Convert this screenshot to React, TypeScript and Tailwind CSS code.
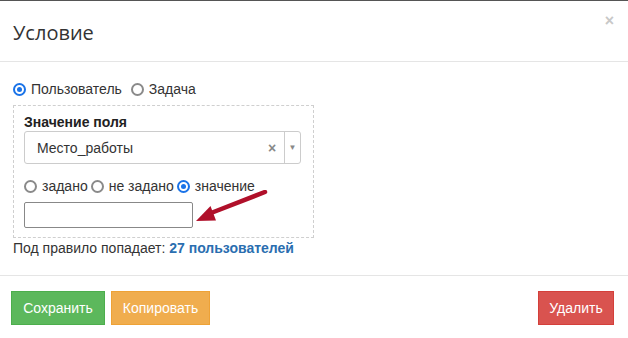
const Radio: React.FC<{ checked?: boolean; label: string }> = ({ checked, label }) => (
  <label className="flex items-center gap-[5px]">
    {checked ? (
      <span className="flex h-[13px] w-[13px] items-center justify-center rounded-full border-[2px] border-[#1a73e8]">
        <span className="h-[5px] w-[5px] rounded-full bg-[#1a73e8]" />
      </span>
    ) : (
      <span className="h-[13px] w-[13px] rounded-full border-[2px] border-[#8a8a8a]" />
    )}
    <span>{label}</span>
  </label>
);

export default function App() {
  return (
    <div className="h-[338px] w-[628px] overflow-hidden bg-white font-['Liberation_Sans',Arial,sans-serif] text-[14px] leading-[16px] text-[#333]">
      <div className="h-[1px] bg-[#555]" />
      {/* header */}
      <div className="relative flex h-[61px] items-center border-b border-[#e5e5e5] px-[13px]">
        <h4 className="mt-[3px] font-['Open_Sans',sans-serif] text-[20px] font-normal text-[#333]">Условие</h4>
        <span className="absolute right-[14px] top-[12px] text-[16px] font-bold text-[#c8c8c8]">×</span>
      </div>

      {/* body */}
      <div className="px-[13px] pt-[19px]">
        <div className="flex items-center gap-[9px]">
          <Radio checked label="Пользователь" />
          <Radio label="Задача" />
        </div>

        <div className="relative mt-[8px] w-[301px] border border-dashed border-[#cfcfcf] px-[10px] pb-[9px] pt-[8px]">
          <div className="font-bold text-[#222]">Значение поля</div>
          <div className="mt-[1px] flex h-[33px] w-[277px] items-center rounded-[3px] border border-[#ccc] pl-[12px]">
            <span className="flex-1">Место_работы</span>
            <span className="w-[16px] text-[14px] font-bold text-[#888]">×</span>
            <span className="flex h-full w-[16px] items-center justify-center border-l border-[#ccc] text-[8px] text-[#888]">▼</span>
          </div>
          <div className="mt-[14px] flex items-center gap-[3px]">
            <Radio label="задано" />
            <Radio label="не задано" />
            <Radio checked label="значение" />
          </div>
          <div className="mt-[8px] h-[26px] w-[169px] rounded-[2px] border border-[#888]" />
          <svg className="absolute left-[181px] top-[84px]" width="80" height="40" viewBox="0 0 80 40">
            <path d="M16 23 L70 2" stroke="#b0102a" strokeWidth="4.5" strokeLinecap="round" />
            <path d="M1 31 L21 30.5 L15.5 16 Z" fill="#b0102a" />
          </svg>
        </div>

        <div className="mt-[2px]">
          Под правило попадает: <span className="font-bold text-[#2a6eb0]">27 пользователей</span>
        </div>
      </div>

      {/* footer */}
      <div className="mt-[19px] flex items-center justify-between border-t border-[#e5e5e5] px-[11px] pt-[15px] text-[14px] text-white">
        <div className="flex gap-[6px]">
          <button className="h-[34px] w-[94px] border border-[#4cae4c] bg-[#5cb85c]">Сохранить</button>
          <button className="h-[34px] w-[99px] border border-[#eea236] bg-[#f0ad4e]">Копировать</button>
        </div>
        <button className="mr-[3px] h-[34px] w-[76px] border border-[#d43f3a] bg-[#d9534f]">Удалить</button>
      </div>
    </div>
  );
}
